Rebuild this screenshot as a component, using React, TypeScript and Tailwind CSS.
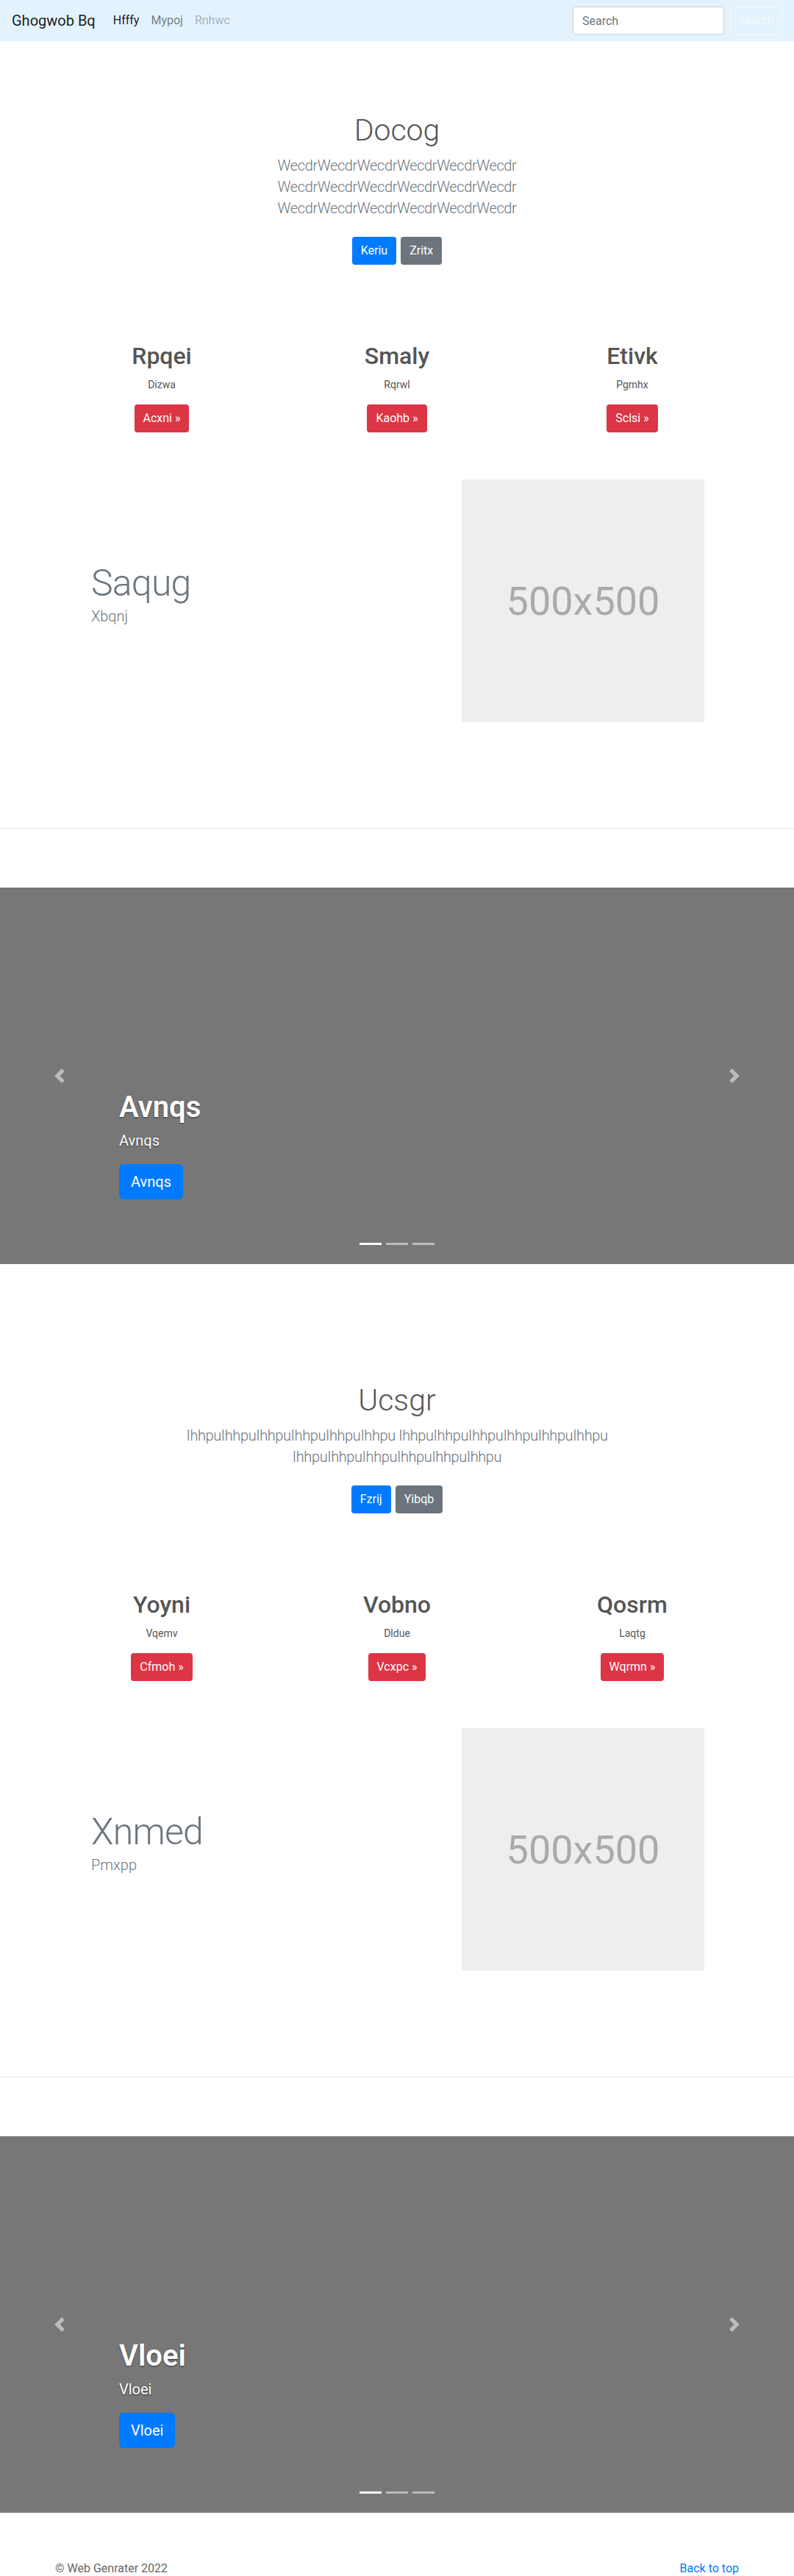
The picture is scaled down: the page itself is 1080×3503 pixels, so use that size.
import React from "react";

type Feature = { title: string; sub: string; btn: string };
type BlockProps = {
  heading: string;
  lines: string[];
  primary: string;
  secondary: string;
  features: Feature[];
  fTitle: string;
  fSub: string;
  cTitle: string;
};

function PrevIcon() {
  return (
    <svg width="20" height="20" viewBox="0 0 8 8" fill="#fff">
      <path d="M5.25 0l-4 4 4 4 1.5-1.5L4.25 4l2.5-2.5L5.25 0z" />
    </svg>
  );
}

function NextIcon() {
  return (
    <svg width="20" height="20" viewBox="0 0 8 8" fill="#fff">
      <path d="M2.75 0l-1.5 1.5L3.75 4l-2.5 2.5L2.75 8l4-4-4-4z" />
    </svg>
  );
}

function Block(p: BlockProps) {
  return (
    <div>
      <section className="pt-[96px] text-center">
        <h1 className="text-[41px] leading-[50px] font-light text-[#555]">{p.heading}</h1>
        <div className="mt-[9px] text-[20px] leading-[29px] font-light tracking-[-0.4px] text-[#6c757d]">
          {p.lines.map((l, i) => (
            <p key={i} className="whitespace-nowrap">
              {l}
            </p>
          ))}
        </div>
        <div className="mt-[24px] flex justify-center gap-[6px]">
          <a className="h-[38px] px-[12px] flex items-center rounded-[4px] bg-[#007bff] text-white text-[16px]">
            {p.primary}
          </a>
          <a className="h-[38px] px-[12px] flex items-center rounded-[4px] bg-[#6c757d] text-white text-[16px]">
            {p.secondary}
          </a>
        </div>
      </section>

      <section className="mt-[105px] w-[960px] mx-auto grid grid-cols-3 text-center">
        {p.features.map((f, i) => (
          <div key={i} className="flex flex-col items-center">
            <h2 className="text-[32px] leading-[38px] font-medium text-[#555]">{f.title}</h2>
            <p className="mt-[10px] text-[14px] leading-[21px] text-[#555]">{f.sub}</p>
            <a className="mt-[16px] h-[38px] px-[12px] flex items-center rounded-[4px] bg-[#dc3545] text-white text-[16px]">
              {f.btn} »
            </a>
          </div>
        ))}
      </section>

      <section className="mt-[64px] flex items-center">
        <div className="flex-1 pl-[124px] pb-[18px]">
          <h2 className="text-[50px] leading-[60px] font-light tracking-[-0.8px] text-[#6c757d]">{p.fTitle}</h2>
          <p className="text-[20px] leading-[30px] font-light text-[#6c757d]">{p.fSub}</p>
        </div>
        <div className="w-[330px] h-[330px] mr-[122px] bg-[#eee] flex items-center justify-center text-[#aaa] text-[54px]">
          500x500
        </div>
      </section>

      <hr className="mt-[144px] border-0 border-t border-[#e5e5e5]" />

      <div className="relative mt-[80px] mb-[64px] h-[512px] bg-[#777] overflow-hidden">
        <div className="absolute left-0 top-0 bottom-0 w-[15%] flex items-center justify-center opacity-50">
          <PrevIcon />
        </div>
        <div className="absolute right-0 top-0 bottom-0 w-[15%] flex items-center justify-center opacity-50">
          <NextIcon />
        </div>
        <div className="absolute left-[15%] right-[15%] bottom-[88px] text-white text-left [text-shadow:0_1px_2px_rgba(0,0,0,.6)]">
          <h1 className="text-[40px] leading-[48px] font-semibold">{p.cTitle}</h1>
          <p className="mt-[6px] text-[20px] leading-[30px]">{p.cTitle}</p>
          <a className="mt-[17px] inline-flex h-[48px] px-[16px] items-center rounded-[6px] bg-[#007bff] text-white text-[20px] [text-shadow:none]">
            {p.cTitle}
          </a>
        </div>
        <div className="absolute left-0 right-0 bottom-[26px] flex justify-center gap-[6px]">
          <span className="block w-[30px] h-[3px] bg-white" />
          <span className="block w-[30px] h-[3px] bg-white/50" />
          <span className="block w-[30px] h-[3px] bg-white/50" />
        </div>
      </div>
    </div>
  );
}

export default function App() {
  const w = "Wecdr".repeat(6);
  const ih = "Ihhpu".repeat(6);
  return (
    <div className="font-['Segoe_UI',Roboto,'Helvetica_Neue',Arial,sans-serif] bg-white text-[#555] w-[1080px]">
      <nav className="h-[56px] px-[16px] bg-[#e3f2fd] flex items-center">
        <a className="text-[20px] leading-[30px] text-black/90 mr-[16px]">Ghogwob Bq</a>
        <a className="px-[8px] text-[16px] text-black/90">Hfffy</a>
        <a className="px-[8px] text-[16px] text-black/50">Mypoj</a>
        <a className="px-[8px] text-[16px] text-black/30">Rnhwc</a>
        <div className="ml-auto flex items-center">
          <input
            placeholder="Search"
            className="w-[206px] h-[38px] mr-[8px] px-[12px] bg-white border border-[#ced4da] rounded-[4px] text-[16px] text-[#495057] placeholder:text-[#6c757d] outline-none"
          />
          <button className="w-[71px] h-[38px] border border-[#f8f9fa] rounded-[4px] text-[#f8f9fa] text-[16px]">
            Search
          </button>
        </div>
      </nav>

      <Block
        heading="Docog"
        lines={[w, w, w]}
        primary="Keriu"
        secondary="Zritx"
        features={[
          { title: "Rpqei", sub: "Dizwa", btn: "Acxni" },
          { title: "Smaly", sub: "Rqrwl", btn: "Kaohb" },
          { title: "Etivk", sub: "Pgmhx", btn: "Sclsi" },
        ]}
        fTitle="Saqug"
        fSub="Xbqnj"
        cTitle="Avnqs"
      />

      <Block
        heading="Ucsgr"
        lines={[ih + " " + ih, ih]}
        primary="Fzrij"
        secondary="Yibqb"
        features={[
          { title: "Yoyni", sub: "Vqemv", btn: "Cfmoh" },
          { title: "Vobno", sub: "Dldue", btn: "Vcxpc" },
          { title: "Qosrm", sub: "Laqtg", btn: "Wqrmn" },
        ]}
        fTitle="Xnmed"
        fSub="Pmxpp"
        cTitle="Vloei"
      />

      <footer className="w-[960px] mx-auto px-[15px] pb-[48px] flex justify-between text-[16px] leading-[24px]">
        <p className="text-[#666]">© Web Genrater 2022</p>
        <a className="text-[#007bff]">Back to top</a>
      </footer>
    </div>
  );
}
